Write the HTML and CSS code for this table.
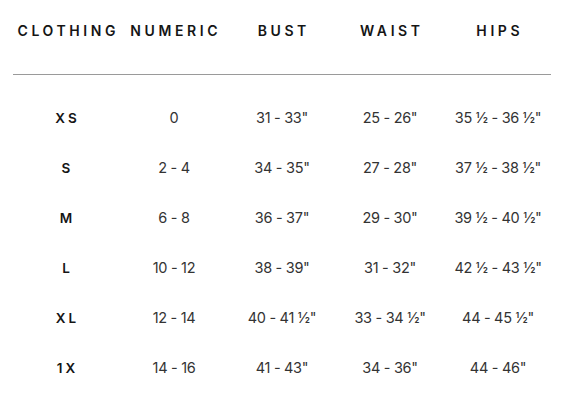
FILE: index.html
```html
<!DOCTYPE html>
<html>
<head>
<meta charset="utf-8">
<link rel="stylesheet" href="styles.css">
</head>
<body>
<div class="chart">
  <div class="head">
    <div>CLOTHING</div><div>NUMERIC</div><div>BUST</div><div>WAIST</div><div>HIPS</div>
  </div>
  <div class="rows">
    <div class="row"><div class="size">XS</div><div>0</div><div>31 - 33"</div><div>25 - 26"</div><div>35 ½ - 36 ½"</div></div>
    <div class="row"><div class="size">S</div><div>2 - 4</div><div>34 - 35"</div><div>27 - 28"</div><div>37 ½ - 38 ½"</div></div>
    <div class="row"><div class="size">M</div><div>6 - 8</div><div>36 - 37"</div><div>29 - 30"</div><div>39 ½ - 40 ½"</div></div>
    <div class="row"><div class="size">L</div><div>10 - 12</div><div>38 - 39"</div><div>31 - 32"</div><div>42 ½ - 43 ½"</div></div>
    <div class="row"><div class="size">XL</div><div>12 - 14</div><div>40 - 41 ½"</div><div>33 - 34 ½"</div><div>44 - 45 ½"</div></div>
    <div class="row"><div class="size">1X</div><div>14 - 16</div><div>41 - 43"</div><div>34 - 36"</div><div>44 - 46"</div></div>
  </div>
</div>
</body>
</html>
```
FILE: styles.css
```css
html, body {
  margin: 0;
  padding: 0;
  background: #fff;
}
body {
  font-family: Inter, "Noto Sans", sans-serif;
}
.chart {
  width: 540px;
  margin-left: 12px;
}
.head, .row {
  display: grid;
  grid-template-columns: repeat(5, 108px);
  text-align: center;
}
.head {
  padding: 21px 0 33px;
  border-bottom: 1px solid #9a9a9a;
  margin: 0 1px;
  grid-template-columns: 107px repeat(4, 108px);
}
.head div {
  font-size: 14px;
  line-height: 20px;
  font-weight: 600;
  letter-spacing: 3.6px;
  color: #151515;
  text-indent: 3.6px;
}
.rows {
  padding-top: 18px;
}
.row {
  height: 50px;
  align-items: center;
}
.row div {
  font-size: 14.5px;
  line-height: 20px;
  color: #333;
  letter-spacing: -0.3px;
}
.row .size {
  font-size: 13.5px;
  font-weight: 600;
  letter-spacing: 3px;
  text-indent: 3px;
  color: #151515;
}
```
